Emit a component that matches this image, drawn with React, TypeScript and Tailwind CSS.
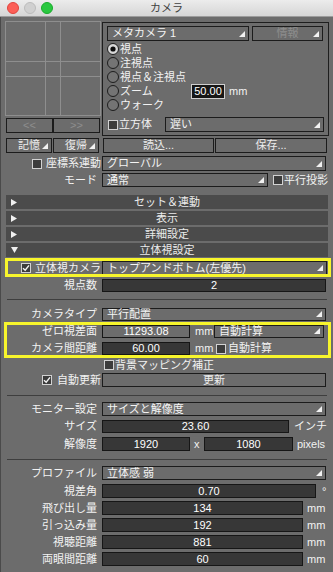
import React from "react";

const Tri = () => (
  <svg width="6" height="6" viewBox="0 0 6 6" className="absolute right-[3px] bottom-[3px]">
    <path d="M6 0V6H0Z" fill="#f2f2f2" />
  </svg>
);

function Dropdown({ text, className = "" }: { text: string; className?: string }) {
  return (
    <div
      className={
        "relative h-full border border-[#1c1c1c] bg-[#6c6c6c] text-[#f4f4f4] pl-[4px] flex items-center whitespace-nowrap " +
        className
      }
    >
      {text}
      <Tri />
    </div>
  );
}

function Btn({ text, className = "", tri = false, dim = false }: { text: string; className?: string; tri?: boolean; dim?: boolean }) {
  return (
    <div
      className={
        "relative h-full border border-[#1c1c1c] bg-[#6c6c6c] flex items-center justify-center whitespace-nowrap " +
        (dim ? "text-[#8e8e8e] " : "text-[#ececec] ") +
        className
      }
    >
      {text}
      {tri && <Tri />}
    </div>
  );
}

function Field({ v, className = "", dark = true }: { v: string; className?: string; dark?: boolean }) {
  return (
    <div
      className={
        "h-full border border-[#161616] flex items-center justify-center text-white " +
        (dark ? "bg-[#373737] " : "bg-[#6c6c6c] ") +
        className
      }
    >
      {v}
    </div>
  );
}

function Check({ on = false, className = "" }: { on?: boolean; className?: string }) {
  return (
    <div
      className={
        "w-[10px] h-[10px] shrink-0 border border-[#d2d2d2] bg-[#3c3c3c] flex items-center justify-center " + className
      }
    >
      {on && (
        <svg width="8" height="8" viewBox="0 0 8 8">
          <path d="M1 4.2 L3.2 6.3 L7 1.4" stroke="#f4f4f4" strokeWidth="1.4" fill="none" />
        </svg>
      )}
    </div>
  );
}

function Radio({ on = false }: { on?: boolean }) {
  return (
    <svg width="12" height="12" viewBox="0 0 12 12" className="shrink-0">
      <circle cx="6" cy="6" r="5.5" fill={on ? "#d8d8d8" : "#747474"} stroke="#1e1e1e" />
      {on && <circle cx="6" cy="6" r="2.6" fill="#0c0c0c" />}
    </svg>
  );
}

function Row({
  label,
  className = "",
  pr = "pr-[5px]",
  children,
}: {
  label: React.ReactNode;
  className?: string;
  pr?: string;
  children?: React.ReactNode;
}) {
  return (
    <div className={"flex items-center " + className}>
      <div className={"w-[102px] h-full shrink-0 flex justify-end items-center whitespace-nowrap text-[#f2f2f2] " + pr}>
        {label}
      </div>
      {children}
    </div>
  );
}

function Section({ text, open = false }: { text: string; open?: boolean }) {
  return (
    <div className="ml-[6px] w-[322px] h-[14px] bg-[#4b4b4b] grid grid-cols-[20px_1fr_20px] items-center">
      <div className="pl-[5px] flex items-center">
        {open ? (
          <svg width="7" height="6" viewBox="0 0 7 6">
            <path d="M0 0H7L3.5 6Z" fill="#f0f0f0" />
          </svg>
        ) : (
          <svg width="6" height="7" viewBox="0 0 6 7">
            <path d="M0 0V7L6 3.5Z" fill="#f0f0f0" />
          </svg>
        )}
      </div>
      <div className="text-center text-[#ececec]">{text}</div>
      <div />
    </div>
  );
}

const Sep = ({ className = "" }: { className?: string }) => (
  <div className={"ml-[7px] w-[320px] h-px bg-[#3e3e3e] " + className} />
);

export default function App() {
  return (
    <div className="relative w-[333px] h-[572px] overflow-hidden bg-[#6c6c6c] text-[11px] leading-none font-[family-name:Liberation_Sans,Noto_Sans_CJK_JP,sans-serif] shadow-[inset_1px_0_0_#4a4a4a]">
      {/* title bar */}
      <div className="h-[17px] bg-gradient-to-b from-[#ececec] to-[#d6d6d6] border-b border-[#9c9c9c] grid grid-cols-[1fr_auto_1fr] items-center">
        <div className="flex items-center gap-[5px] pl-[7px]">
          <div className="w-[12px] h-[12px] rounded-full bg-[#fc5f57] border border-[#e0443e]" />
          <div className="w-[12px] h-[12px] rounded-full bg-[#d0d0d0] border border-[#bcbcbc]" />
          <div className="w-[12px] h-[12px] rounded-full bg-[#2ac840] border border-[#1aab2c]" />
        </div>
        <div className="text-[#404040] text-[11px]">カメラ</div>
        <div />
      </div>

      {/* top section */}
      <div className="flex items-start pl-[5px] mt-[4px]">
        <div className="w-[96px] shrink-0">
          <div className="h-[95px] border border-[#8e8e8e]">
            <svg width="94" height="93" viewBox="0 0 94 93" className="block">
              <line x1="39.5" y1="0" x2="39.5" y2="93" stroke="#8e8e8e" />
              <line x1="54.5" y1="0" x2="54.5" y2="93" stroke="#8e8e8e" />
              <line x1="0" y1="39.5" x2="94" y2="39.5" stroke="#8e8e8e" />
              <line x1="0" y1="54.5" x2="94" y2="54.5" stroke="#8e8e8e" />
            </svg>
          </div>
          <div className="flex h-[15px] mt-[2px] ml-[1px]">
            <Btn text="<<" dim className="w-[47px]" />
            <Btn text=">>" dim className="w-[47px]" />
          </div>
        </div>
        <div className="ml-[1px] mt-[1px] w-[227px] h-[114px] border border-[#1e1e1e] pl-[4px] pt-[3px] flex flex-col">
          <div className="flex h-[15px]">
            <Dropdown text="メタカメラ 1" className="w-[142px]" />
            <Btn text="情報" dim tri className="ml-[3px] w-[71px]" />
          </div>
          <div className="flex flex-col mt-[1px] text-[#f2f2f2]">
            <div className="flex items-center h-[14px] gap-[1px]">
              <Radio on />
              <span>視点</span>
            </div>
            <div className="flex items-center h-[14px] gap-[1px]">
              <Radio />
              <span>注視点</span>
            </div>
            <div className="flex items-center h-[14px] gap-[1px]">
              <Radio />
              <span>視点＆注視点</span>
            </div>
            <div className="flex items-center h-[14px]">
              <div className="w-[84px] flex items-center gap-[1px]">
                <Radio />
                <span>ズーム</span>
              </div>
              <div className="w-[34px] h-[15px] border border-[#cfcfcf] bg-[#161616] flex items-center justify-center text-white">
                50.00
              </div>
              <span className="ml-[4px]">mm</span>
            </div>
            <div className="flex items-center h-[14px] gap-[1px]">
              <Radio />
              <span>ウォーク</span>
            </div>
          </div>
          <div className="flex items-center h-[15px] mt-[5px] text-[#f2f2f2]">
            <Check className="ml-[1px]" />
            <span className="ml-[1px] w-[46px]">立方体</span>
            <Dropdown text="遅い" className="w-[159px]" />
          </div>
        </div>
      </div>

      {/* buttons row */}
      <div className="flex h-[15px] mt-[2px] pl-[6px]">
        <Btn text="記憶" tri className="w-[46px]" />
        <Btn text="復帰" tri className="ml-[1px] w-[46px]" />
        <Btn text="読込..." className="ml-[4px] w-[111px]" />
        <Btn text="保存..." className="ml-[1px] w-[112px]" />
      </div>

      <Row
        className="h-[15px] mt-[3px]"
        pr="pr-[1px]"
        label={
          <>
            <Check className="mr-[4px]" />
            <span>座標系連動</span>
          </>
        }
      >
        <Dropdown text="グローバル" className="w-[224px]" />
      </Row>
      <Row className="h-[14px] mt-[2px]" label="モード">
        <Dropdown text="通常" className="w-[166px]" />
        <Check className="ml-[5px]" />
        <span className="ml-[1px] text-[#f2f2f2]">平行投影</span>
      </Row>

      <div className="mt-[8px] flex flex-col gap-[2px]">
        <Section text="セット＆連動" />
        <Section text="表示" />
        <Section text="詳細設定" />
        <Section text="立体視設定" open />
      </div>

      <Row
        className="h-[14px] mt-[4px]"
        pr="pr-[1px]"
        label={
          <>
            <Check on className="mr-[4px]" />
            <span>立体視カメラ</span>
          </>
        }
      >
        <Dropdown text="トップアンドボトム(左優先)" className="w-[225px]" />
      </Row>
      <Row className="h-[13px] mt-[4px]" label="視点数">
        <Field v="2" className="w-[224px]" />
      </Row>
      <Sep className="mt-[7px]" />
      <Row className="h-[13px] mt-[8px]" label="カメラタイプ">
        <Dropdown text="平行配置" className="w-[224px]" />
      </Row>
      <Row className="h-[13px] mt-[4px]" label="ゼロ視差面">
        <Field v="11293.08" dark={false} className="w-[88px]" />
        <span className="ml-[5px] w-[19px] text-[#f2f2f2]">mm</span>
        <Dropdown text="自動計算" className="w-[110px]" />
      </Row>
      <Row className="h-[13px] mt-[4px]" label="カメラ間距離">
        <Field v="60.00" className="w-[88px]" />
        <span className="ml-[5px] w-[21px] text-[#f2f2f2]">mm</span>
        <Check />
        <span className="ml-[2px] text-[#f2f2f2]">自動計算</span>
      </Row>
      <div className="flex items-center h-[12px] mt-[4px] pl-[104px] text-[#f2f2f2]">
        <Check />
        <span className="ml-[1px]">背景マッピング補正</span>
      </div>
      <Row
        className="h-[14px] mt-[2px]"
        pr="pr-[1px]"
        label={
          <>
            <Check on className="mr-[5px]" />
            <span>自動更新</span>
          </>
        }
      >
        <Btn text="更新" className="w-[224px]" />
      </Row>
      <Sep className="mt-[8px]" />
      <Row className="h-[14px] mt-[6px]" label="モニター設定">
        <Dropdown text="サイズと解像度" className="w-[224px]" />
      </Row>
      <Row className="h-[13px] mt-[4px]" label="サイズ">
        <Field v="23.60" className="w-[187px]" />
        <span className="ml-[5px] text-[#f2f2f2]">インチ</span>
      </Row>
      <Row className="h-[14px] mt-[4px]" label="解像度">
        <Field v="1920" className="w-[88px]" />
        <span className="ml-[4px] w-[10px] text-[#f2f2f2]">x</span>
        <Field v="1080" className="w-[89px]" />
        <span className="ml-[4px] text-[#f2f2f2]">pixels</span>
      </Row>
      <Sep className="mt-[8px]" />
      <Row className="h-[14px] mt-[6px]" label="プロファイル">
        <Dropdown text="立体感 弱" className="w-[224px]" />
      </Row>
      <Row className="h-[14px] mt-[4px]" label="視差角">
        <Field v="0.70" className="w-[214px]" />
        <span className="ml-[6px] text-[#f2f2f2]">°</span>
      </Row>
      <Row className="h-[14px] mt-[3px]" label="飛び出し量">
        <Field v="134" className="w-[201px]" />
        <span className="ml-[4px] text-[#f2f2f2]">mm</span>
      </Row>
      <Row className="h-[14px] mt-[3px]" label="引っ込み量">
        <Field v="192" className="w-[201px]" />
        <span className="ml-[4px] text-[#f2f2f2]">mm</span>
      </Row>
      <Row className="h-[14px] mt-[3px]" label="視聴距離">
        <Field v="881" className="w-[201px]" />
        <span className="ml-[4px] text-[#f2f2f2]">mm</span>
      </Row>
      <Row className="h-[14px] mt-[3px]" label="両眼間距離">
        <Field v="60" className="w-[201px]" />
        <span className="ml-[4px] text-[#f2f2f2]">mm</span>
      </Row>

      {/* yellow annotation boxes */}
      <div className="absolute left-[5px] top-[258px] w-[326px] h-[19px] border-[3px] border-[#f7f52c] pointer-events-none" />
      <div className="absolute left-[4px] top-[322px] w-[327px] h-[36px] border-[3px] border-[#f7f52c] pointer-events-none" />
    </div>
  );
}
